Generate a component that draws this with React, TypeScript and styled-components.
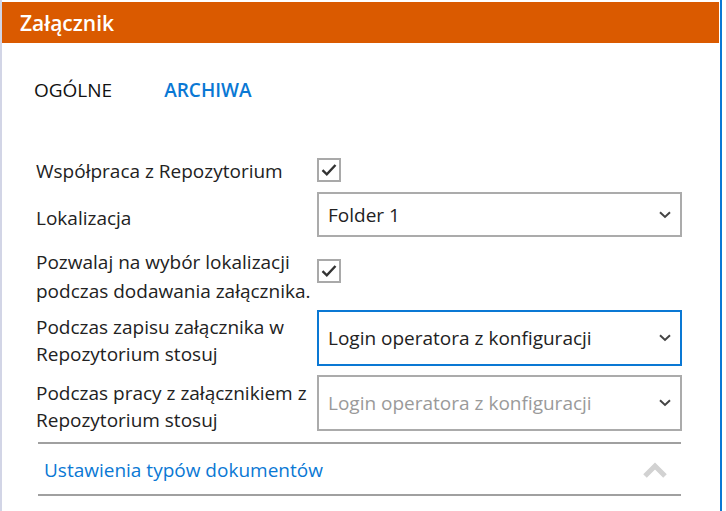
import React from "react";
import styled, { createGlobalStyle } from "styled-components";

const Global = createGlobalStyle`
  html, body { margin: 0; padding: 0; background: #ffffff; }
  body { font-family: "Open Sans", "Noto Sans", sans-serif; }
`;

const Frame = styled.div`
  box-sizing: border-box;
  width: 722px;
  height: 511px;
  border-left: 2px solid #d2d5e6;
  border-right: 2px solid #0a78d4;
  padding-top: 2px;
  background: #fff;
  display: flex;
  flex-direction: column;
`;

const Header = styled.div`
  height: 41px;
  margin-right: 1px;
  background: #da5a00;
  color: #fff;
  font-size: 21px;
  font-weight: 600;
  display: flex;
  align-items: center;
  padding-left: 18px;
`;

const Tabs = styled.div`
  display: flex;
  gap: 52px;
  padding: 34px 0 0 32px;
  height: 26px;
  align-items: center;
`;

const Tab = styled.div<{ $active?: boolean }>`
  font-size: 19px;
  color: ${(p) => (p.$active ? "#0a78d4" : "#111")};
  font-weight: ${(p) => (p.$active ? 600 : 400)};
`;

const Form = styled.div`
  display: flex;
  flex-direction: column;
  padding: 47px 0 0 34px;
`;

const Row = styled.div<{ $h: number }>`
  display: grid;
  grid-template-columns: 281px 365px;
  height: ${(p) => p.$h}px;
  align-items: start;
`;

const Label = styled.div<{ $top: number; $lh?: number }>`
  margin-top: ${(p) => p.$top}px;
  font-size: 19px;
  line-height: ${(p) => p.$lh ?? 27}px;
  color: #222;
  white-space: nowrap;
`;

const Box = styled.div<{ $top: number }>`
  margin-top: ${(p) => p.$top}px;
  width: 24px;
  height: 24px;
  box-sizing: border-box;
  border: 2px solid #a9a9a9;
  display: flex;
  align-items: center;
  justify-content: center;
`;

const Select = styled.div<{ $top: number; $h: number; $focus?: boolean; $muted?: boolean }>`
  margin-top: ${(p) => p.$top}px;
  height: ${(p) => p.$h}px;
  box-sizing: border-box;
  border: 2px solid ${(p) => (p.$focus ? "#0a78d4" : "#ababab")};
  display: flex;
  align-items: center;
  justify-content: space-between;
  padding: 0 9px 0 9px;
  font-size: 19px;
  color: ${(p) => (p.$muted ? "#9a9a9a" : "#222")};
`;

const Section = styled.div`
  margin: 12px 0 0 36px;
  width: 623px;
  height: 48px;
  border-top: 2px solid #a0a0a0;
  border-bottom: 2px solid #a0a0a0;
  display: flex;
  align-items: center;
  justify-content: space-between;
  padding: 2px 14px 0 6px;
  box-sizing: content-box;
`;

const SectionTitle = styled.div`
  font-size: 19px;
  color: #0a78d4;
`;

const Check = () => (
  <svg width="16" height="14" viewBox="0 0 16 14">
    <path d="M1.5 7.2 L5.8 11.3 L14.5 2" fill="none" stroke="#333" strokeWidth="2.4" />
  </svg>
);

const ChevronDown = () => (
  <svg width="12" height="8" viewBox="0 0 12 8">
    <path d="M1 1.3 L6 6 L11 1.3" fill="none" stroke="#444" strokeWidth="2" />
  </svg>
);

const ChevronUp = () => (
  <svg width="24" height="16" viewBox="0 0 24 16">
    <path d="M2 14 L12 4 L22 14" fill="none" stroke="#d2d2d2" strokeWidth="5" />
  </svg>
);

export default function App() {
  return (
    <>
      <Global />
      <Frame>
        <Header>Załącznik</Header>
        <Tabs>
          <Tab>OGÓLNE</Tab>
          <Tab $active>ARCHIWA</Tab>
        </Tabs>
        <Form>
          <Row $h={40}>
            <Label $top={8}>Współpraca z Repozytorium</Label>
            <Box $top={8}>
              <Check />
            </Box>
          </Row>
          <Row $h={49}>
            <Label $top={15}>Lokalizacja</Label>
            <Select $top={2} $h={45}>
              <span>Folder 1</span>
              <ChevronDown />
            </Select>
          </Row>
          <Row $h={69}>
            <Label $top={9} $lh={29}>
              Pozwalaj na wybór lokalizacji
              <br />
              podczas dodawania załącznika.
            </Label>
            <Box $top={20}>
              <Check />
            </Box>
          </Row>
          <Row $h={63}>
            <Label $top={6}>
              Podczas zapisu załącznika w
              <br />
              Repozytorium stosuj
            </Label>
            <Select $top={2} $h={56} $focus>
              <span>Login operatora z konfiguracji</span>
              <ChevronDown />
            </Select>
          </Row>
          <Row $h={59}>
            <Label $top={9}>
              Podczas pracy z załącznikiem z
              <br />
              Repozytorium stosuj
            </Label>
            <Select $top={4} $h={56} $muted>
              <span>Login operatora z konfiguracji</span>
              <ChevronDown />
            </Select>
          </Row>
        </Form>
        <Section>
          <SectionTitle>Ustawienia typów dokumentów</SectionTitle>
          <ChevronUp />
        </Section>
      </Frame>
    </>
  );
}
